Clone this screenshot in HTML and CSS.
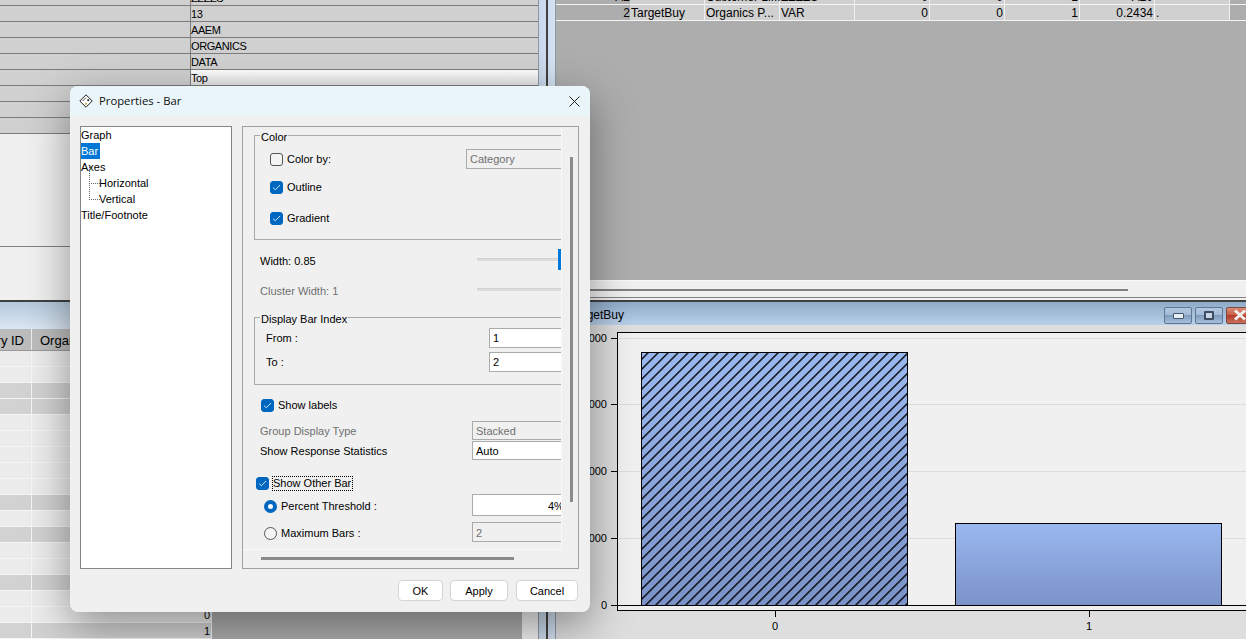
FILE: index.html
```html
<!DOCTYPE html>
<html lang="en">
  <head>
    <meta charset="UTF-8" />
    <title>Properties - Bar</title>
    <link rel="stylesheet" href="styles.css">
  </head>

  <body>
    <div class="desktop">
      <div class="left-col">
        <div class="attr-table">
          <div class="attr-row"><span class="attr-name"></span><span class="attr-val">ZZZZS</span></div>
          <div class="attr-row"><span class="attr-name"></span><span class="attr-val">13</span></div>
          <div class="attr-row"><span class="attr-name"></span><span class="attr-val">AAEM</span></div>
          <div class="attr-row"><span class="attr-name"></span><span class="attr-val">ORGANICS</span></div>
          <div class="attr-row"><span class="attr-name"></span><span class="attr-val">DATA</span></div>
          <div class="attr-row current"><span class="attr-name"></span><span class="attr-val">Top</span></div>
          <div class="attr-row"><span class="attr-name"></span><span class="attr-val"></span></div>
          <div class="attr-row"><span class="attr-name"></span><span class="attr-val"></span></div>
          <div class="attr-row"><span class="attr-name"></span><span class="attr-val"></span></div>
        </div>
        <div class="attr-empty"></div>
        <div class="attr-foot"></div>

        <div class="sub-title"></div>
        <div class="data-wrap">
          <div class="data-table">
            <div class="data-head">
              <span class="hd-a">Country ID</span>
              <span class="hd-b">Organics</span>
            </div>
            <div class="data-row"><i></i><i></i><i></i></div>
            <div class="data-row"><i></i><i></i><i></i></div>
            <div class="data-row dark"><i></i><i></i><i></i></div>
            <div class="data-row dark"><i></i><i></i><i></i></div>
            <div class="data-row"><i></i><i></i><i></i></div>
            <div class="data-row"><i></i><i></i><i></i></div>
            <div class="data-row"><i></i><i></i><i></i></div>
            <div class="data-row"><i></i><i></i><i></i></div>
            <div class="data-row"><i></i><i></i><i></i></div>
            <div class="data-row dark"><i></i><i></i><i></i></div>
            <div class="data-row"><i></i><i></i><i></i></div>
            <div class="data-row dark"><i></i><i></i><i></i></div>
            <div class="data-row"><i></i><i></i><i></i></div>
            <div class="data-row"><i></i><i></i><i></i></div>
            <div class="data-row dark"><i></i><i></i><i></i></div>
            <div class="data-row"><i></i><i></i><i></i></div>
            <div class="data-row"><i></i><i></i><i>0</i></div>
            <div class="data-row dark"><i></i><i></i><i>1</i></div>
          </div>
          <div class="data-blank"></div>
          <div class="data-strip"></div>
        </div>
      </div>

      <div class="splitter"><div class="splitter-line"></div></div>

      <div class="right-col">
        <div class="var-table">
          <div class="var-row">
            <span class="var-no">A2</span><span></span><span>Customer Lif...</span><span>ZZZZS</span>
            <span class="num">0</span><span class="num">0</span><span class="num">1</span><span class="num">A20</span><span></span>
          </div>
          <div class="var-row">
            <span class="var-no">2</span><span>TargetBuy</span><span>Organics P...</span><span>VAR</span>
            <span class="num">0</span><span class="num">0</span><span class="num">1</span><span class="num">0.2434</span><span>.</span>
          </div>
        </div>
        <div class="var-empty"></div>
        <div class="var-foot"><div class="var-scroll"></div></div>

        <div class="chart-title">
          <span class="chart-name">TargetBuy</span>
          <div class="win-btns">
            <div class="win-btn"><span class="min-glyph"></span></div>
            <div class="win-btn"><span class="max-glyph"></span></div>
            <div class="win-btn close">
              <svg width="14" height="12" viewBox="0 0 14 12"><path d="M2 1.5 12 10.5M12 1.5 2 10.5" stroke="#f4f0ee" stroke-width="3" fill="none" /></svg>
            </div>
          </div>
        </div>
        <svg class="chart" width="690" height="314" viewBox="556 325 690 314">
          <defs>
            <linearGradient id="barFill" x1="0" y1="0" x2="0" y2="1">
              <stop offset="0" stop-color="#9ab8f0" />
              <stop offset="1" stop-color="#7a92c8" />
            </linearGradient>
            <pattern id="hatch" width="7.07" height="7.07" patternUnits="userSpaceOnUse" patternTransform="rotate(45)">
              <rect width="1.4" height="7.07" fill="#000" />
            </pattern>
          </defs>
          <rect x="617.5" y="332.5" width="700" height="278" fill="#f0f0f0" stroke="#000" />
          <g stroke="#dcdcdc">
            <path d="M618 338.5H1246M618 404.5H1246M618 471.5H1246M618 538.5H1246" />
          </g>
          <g stroke="#000">
            <path d="M611 338.5H617M611 404.5H617M611 471.5H617M611 538.5H617M611 605.5H1246M775.5 611V617M1089.5 611V617" />
          </g>
          <rect x="641.5" y="352.5" width="266" height="253" fill="url(#barFill)" stroke="#000" />
          <rect x="641.5" y="352.5" width="266" height="253" fill="url(#hatch)" stroke="#000" />
          <rect x="955.5" y="523.5" width="266" height="82" fill="url(#barFill)" stroke="#000" />
          <g class="tick-text" text-anchor="end">
            <text x="607" y="342">4000</text>
            <text x="607" y="408">3000</text>
            <text x="607" y="475">2000</text>
            <text x="607" y="542">1000</text>
            <text x="607" y="609">0</text>
          </g>
          <g class="tick-text" text-anchor="middle">
            <text x="775" y="630">0</text>
            <text x="1089" y="630">1</text>
          </g>
        </svg>
      </div>
    </div>

    <div class="dialog">
      <div class="dlg-head">
        <svg class="dlg-icon" width="14" height="14" viewBox="0 0 14 14">
          <path d="M7 .8 13.2 7 7 13.2.8 7Z" fill="#fff" stroke="#222" stroke-linejoin="round" />
          <path d="M3.6 7 7 3.6" stroke="#444" fill="none" />
          <circle cx="9.2" cy="6.2" r="1.1" fill="#333" />
          <circle cx="7" cy="9.8" r="1.1" fill="#c9a93a" />
        </svg>
        <span class="dlg-title">Properties - Bar</span>
        <svg class="dlg-close" width="11" height="11" viewBox="0 0 11 11"><path d="M.5.5 10.5 10.5M10.5.5.5 10.5" stroke="#222" fill="none" /></svg>
      </div>

      <div class="dlg-main">
        <ul class="tree">
          <li>Graph</li>
          <li><span class="picked">Bar</span></li>
          <li>Axes</li>
          <li class="tree-child">Horizontal</li>
          <li class="tree-child">Vertical</li>
          <li>Title/Footnote</li>
        </ul>

        <div class="panel">
          <div class="form-view">
            <div class="form-inner">
              <div class="group group-color">
                <div class="group-title">Color</div>
                <div class="row row-colorby">
                  <span class="cb"></span><span class="cb-text">Color by:</span>
                  <span class="ctl off w-category">Category</span>
                </div>
                <div class="row row-outline">
                  <span class="cb on"><svg width="9" height="7" viewBox="0 0 9 7"><path d="M1 3.6 3.3 5.8 8 1" stroke="#cfe3f7" fill="none" /></svg></span><span class="cb-text">Outline</span>
                </div>
                <div class="row row-gradient">
                  <span class="cb on"><svg width="9" height="7" viewBox="0 0 9 7"><path d="M1 3.6 3.3 5.8 8 1" stroke="#cfe3f7" fill="none" /></svg></span><span class="cb-text">Gradient</span>
                </div>
              </div>

              <div class="slider-row first">
                <span class="slider-label">Width: 0.85</span>
                <div class="slider"><div class="track"></div><div class="thumb"></div></div>
              </div>
              <div class="slider-row second">
                <span class="slider-label muted">Cluster Width: 1</span>
                <div class="slider"><div class="track"></div></div>
              </div>

              <div class="group group-index">
                <div class="group-title">Display Bar Index</div>
                <div class="row row-from">
                  <span>From :</span><span class="ctl w-index">1</span>
                </div>
                <div class="row row-to">
                  <span>To :</span><span class="ctl w-index">2</span>
                </div>
              </div>

              <div class="row line-labels">
                <span class="cb on"><svg width="9" height="7" viewBox="0 0 9 7"><path d="M1 3.6 3.3 5.8 8 1" stroke="#cfe3f7" fill="none" /></svg></span><span class="cb-text">Show labels</span>
              </div>
              <div class="row line-group">
                <span class="muted">Group Display Type</span><span class="ctl off w-wide">Stacked</span>
              </div>
              <div class="row line-resp">
                <span>Show Response Statistics</span><span class="ctl w-wide">Auto</span>
              </div>
              <div class="row line-other">
                <span class="cb on"><svg width="9" height="7" viewBox="0 0 9 7"><path d="M1 3.6 3.3 5.8 8 1" stroke="#cfe3f7" fill="none" /></svg></span><span class="cb-text focused">Show Other Bar</span>
              </div>
              <div class="row line-percent">
                <span class="radio on"></span><span class="cb-text">Percent Threshold :</span>
                <span class="ctl w-wide percent">4%</span>
              </div>
              <div class="row line-max">
                <span class="radio"></span><span class="cb-text">Maximum Bars :</span>
                <span class="ctl off w-wide">2</span>
              </div>
              <div class="row line-last"><span class="ctl off w-wide"></span></div>
            </div>
          </div>
          <div class="vbar"></div>
          <div class="hbar"></div>
        </div>
      </div>

      <div class="dlg-foot">
        <button class="btn btn-ok">OK</button>
        <button class="btn btn-apply">Apply</button>
        <button class="btn btn-cancel">Cancel</button>
      </div>
    </div>
  </body>
</html>
```

FILE: styles.css
```css
* {
  box-sizing: border-box;
}

html,
body {
  margin: 0;
  height: 639px;
  overflow: hidden;
}

body {
  font-family: "Liberation Sans", Arial, sans-serif;
  font-size: 11px;
  color: #000;
  background: #f0f0f0;
  position: relative;
}

.desktop {
  display: flex;
  width: 1246px;
  height: 639px;
}

/* left side */
.left-col {
  width: 538px;
  height: 639px;
  overflow: hidden;
  display: flex;
  flex-direction: column;
}

.attr-table {
  margin-top: -10px;
  font-size: 11px;
}

.attr-row {
  display: flex;
  height: 16px;
  background: #d0d0d0;
  border-bottom: 1px solid #7c7c7c;
  line-height: 17px;
}

.attr-name {
  width: 190px;
}

.attr-val {
  flex: 1;
  border-left: 1px solid #7c7c7c;
  letter-spacing: -0.4px;
}

.attr-row.current .attr-val {
  background: linear-gradient(#fff, #e4e4e4);
}

.attr-empty {
  height: 113px;
  border-bottom: 1px solid #808080;
  background: #f0f0f0;
}

.attr-foot {
  height: 55px;
  background: #f0f0f0;
  border-bottom: 2px solid #404040;
}

.sub-title {
  height: 27px;
  background: linear-gradient(#b4c8dc, #dbe7f2);
}

.data-wrap {
  display: flex;
  flex: 1;
  background: #adadad;
  min-height: 0;
}

.data-table {
  width: 212px;
}

.data-head {
  display: flex;
  height: 22px;
  background: #bcbcbc;
  border-bottom: 1px solid #999;
  font-size: 13px;
  line-height: 23px;
}

.hd-a {
  width: 32px;
  overflow: hidden;
  white-space: nowrap;
  direction: rtl;
  padding-right: 7px;
  border-right: 1px solid #eee;
}

.hd-b {
  padding-left: 8px;
}

.data-row {
  display: flex;
  height: 16px;
  background: #ececec;
  border-bottom: 1px solid #f6f6f6;
  line-height: 17px;
}

.data-row.dark {
  background: #d2d2d2;
}

.data-row i {
  font-style: normal;
  text-align: right;
  padding-right: 1px;
}

.data-row i:nth-child(1) {
  width: 32px;
  border-right: 1px solid #f6f6f6;
}

.data-row i:nth-child(2) {
  width: 158px;
}

.data-row i:nth-child(3) {
  width: 22px;
  border-right: 1px solid #f6f6f6;
}

.data-blank {
  width: 310px;
}

.data-strip {
  width: 16px;
  background: #f0f0f0;
}

.splitter {
  width: 18px;
  padding: 0 1px;
  background: linear-gradient(90deg, #c8d8ea, #d4e2f2);
  border-left: 1px solid #8c9aa8;
  border-right: 1px solid #8c9aa8;
  display: flex;
  justify-content: center;
}

.splitter-line {
  width: 2px;
  background: #404040;
}

/* right side */
.right-col {
  width: 690px;
  height: 639px;
  overflow: hidden;
  display: flex;
  flex-direction: column;
  background: #dedede;
}

.var-table {
  margin-top: -11px;
  font-size: 12px;
}

.var-row {
  display: flex;
  height: 16px;
  background: #adadad;
  border-bottom: 1px solid #f4f4f4;
  line-height: 17px;
}

.var-row span {
  width: 75px;
  flex-shrink: 0;
  background: #d0d0d0;
  border-right: 1px solid #f0f0f0;
  padding-left: 1px;
  white-space: nowrap;
}

.var-row .num {
  text-align: right;
  padding-right: 1px;
}

.var-row .var-no {
  width: 74px;
  background: #adadad;
  border-right: 0;
  text-align: right;
  padding-right: 0;
}

.var-empty {
  height: 259px;
  background: #adadad;
}

.var-foot {
  height: 22px;
  background: #f0f0f0;
  border-top: 1px solid #fafafa;
  border-bottom: 2px solid #404040;
  padding-top: 8px;
}

.var-foot::after {
  content: "";
  display: block;
  height: 1px;
  margin-top: 6px;
  background: #808080;
}

.var-scroll {
  width: 572px;
  height: 2px;
  background: #808080;
}

.chart-title {
  display: flex;
  align-items: center;
  height: 23px;
  flex-shrink: 0;
  padding-left: 14px;
  font-size: 12px;
  background: linear-gradient(#8fabc8, #b9d0e9);
  overflow: hidden;
}

.chart-name {
  margin-top: 2px;
}

.win-btns {
  display: flex;
  gap: 3px;
  margin: 3px -8px 0 auto;
}

.win-btn {
  width: 28px;
  height: 17px;
  flex-shrink: 0;
  display: flex;
  align-items: center;
  justify-content: center;
  border: 1px solid #5f7794;
  border-radius: 2px;
  background: linear-gradient(#b2c8e0 0, #a4bcd8 45%, #7f9cbd 50%, #a6c0dc 100%);
}

.win-btn.close {
  border-color: #7d4a3f;
  background: linear-gradient(#d98a76 0, #c8604a 45%, #b23c26 50%, #c8705c 100%);
}

.min-glyph {
  width: 11px;
  height: 6px;
  margin-top: 2px;
  background: #e8eef5;
  border: 1px solid #46566a;
  border-radius: 1px;
}

.max-glyph {
  width: 10px;
  height: 9px;
  background: #c9d6e6;
  border: 2px solid #3d4e64;
  border-radius: 1px;
}

.chart {
  display: block;
  flex-shrink: 0;
}

.tick-text {
  font-family: "Liberation Sans", Arial, sans-serif;
  font-size: 11px;
  fill: #000;
}

/* dialog */
.dialog {
  position: absolute;
  left: 70px;
  top: 86px;
  width: 520px;
  height: 526px;
  background: #f0f0f0;
  border-radius: 8px;
  box-shadow: 0 14px 44px rgba(0, 0, 0, 0.4);
  overflow: hidden;
}

.dlg-head {
  display: flex;
  align-items: center;
  height: 30px;
  padding: 0 10px 0 9px;
  background: #e9f5f8;
}

.dlg-icon {
  flex-shrink: 0;
}

.dlg-title {
  margin: 0 0 2px 6px;
  font-family: "Open Sans", sans-serif;
  font-size: 11.3px;
  color: #111;
}

.dlg-close {
  margin-left: auto;
}

.dlg-main {
  display: flex;
  gap: 10px;
  padding: 10px 11px 0 10px;
}

.tree {
  list-style: none;
  width: 152px;
  height: 443px;
  margin: 0;
  padding: 0;
  background: #fff;
  border: 1px solid #82878e;
  line-height: 16px;
}

.tree li {
  height: 16px;
  white-space: nowrap;
}

.picked {
  display: inline-block;
  width: 19px;
  background: #0078d7;
  color: #fff;
}

.tree .tree-child {
  position: relative;
  padding-left: 18px;
}

.tree-child::before {
  content: "";
  position: absolute;
  left: 8px;
  top: -8px;
  width: 10px;
  height: 16px;
  border-left: 1px dotted #666;
  border-bottom: 1px dotted #666;
}

.panel {
  width: 337px;
  height: 443px;
  border: 1px solid #a0a0a0;
  display: grid;
  grid-template-columns: 319px 1fr;
  grid-template-rows: 423px 1fr;
}

.form-view {
  overflow: hidden;
  border-right: 1px solid #f8f8f8;
  border-bottom: 1px solid #fafafa;
}

.form-inner {
  width: 380px;
  padding-top: 8px;
}

.vbar {
  width: 3px;
  height: 345px;
  margin: 30px 0 0 8px;
  background: #8a8a8a;
}

.hbar {
  width: 253px;
  height: 3px;
  margin: 7px 0 0 18px;
  background: #8a8a8a;
}

.group {
  margin-left: 11px;
  width: 360px;
  padding-right: 14px;
  border: 1px solid #a9a9a9;
}

.group-title {
  width: fit-content;
  height: 13px;
  margin-top: -5px;
  padding: 0 1px;
  line-height: 13px;
  background: #f0f0f0;
}

.group-color {
  height: 105px;
  padding-left: 15px;
}

.group-color .group-title {
  margin-left: -10px;
}

.group-index {
  height: 68px;
  margin-top: 17px;
  padding-left: 11px;
}

.group-index .group-title {
  margin-left: -6px;
}

.row {
  display: flex;
  align-items: center;
  height: 20px;
}

.row-colorby {
  margin-top: 5px;
}

.row-outline {
  margin-top: 8px;
}

.row-gradient {
  margin-top: 11px;
}

.row-from {
  margin-top: 2px;
}

.row-to {
  margin-top: 4px;
}

.cb {
  width: 13px;
  height: 13px;
  flex-shrink: 0;
  display: flex;
  align-items: center;
  justify-content: center;
  border: 1px solid #555;
  border-radius: 3px;
  background: #f4f4f4;
}

.cb.on {
  background: #0067c0;
  border-color: #0067c0;
}

.cb-text {
  margin-left: 4px;
}

.focused {
  outline: 1px dotted #000;
  padding: 0 1px 1px 0;
}

.radio {
  width: 13px;
  height: 13px;
  flex-shrink: 0;
  border: 1px solid #555;
  border-radius: 50%;
  background: #f4f4f4;
}

.radio.on {
  border: 4px solid #0067c0;
  background: #fff;
}

.muted {
  color: #6f6f6f;
}

.ctl {
  margin-left: auto;
  height: 100%;
  display: flex;
  align-items: center;
  padding-left: 3px;
  background: #fff;
  border: 1px solid #ababab;
  font-size: 11px;
}

.ctl.off {
  background: #f0f0f0;
  color: #6f6f6f;
}

.w-category {
  width: 133px;
}

.w-index {
  width: 110px;
}

.w-wide {
  width: 128px;
}

.percent {
  padding-left: 75px;
}

.slider-row {
  display: flex;
  width: 357px;
  height: 21px;
  padding-left: 17px;
}

.slider-row.first {
  margin-top: 9px;
}

.slider-row.second {
  margin-top: 9px;
}

.slider-label {
  line-height: 24px;
}

.slider {
  position: relative;
  width: 123px;
  height: 21px;
  margin-left: auto;
}

.track {
  height: 3px;
  margin-top: 9px;
  background: #dcdcdc;
  border-top: 1px solid #d0d0d0;
}

.thumb {
  position: absolute;
  left: 81px;
  top: 0;
  width: 11px;
  height: 21px;
  background: #0078d7;
}

.line-labels,
.line-group,
.line-resp,
.line-other,
.line-percent,
.line-max,
.line-last {
  width: 357px;
}

.line-labels {
  margin-top: 10px;
  padding-left: 18px;
}

.line-group {
  height: 19px;
  margin-top: 6px;
  padding-left: 17px;
}

.line-resp {
  height: 19px;
  margin-top: 1px;
  padding-left: 17px;
}

.line-other {
  margin-top: 13px;
  padding-left: 13px;
}

.line-percent {
  height: 22px;
  margin-top: 1px;
  padding-left: 21px;
}

.line-max {
  margin-top: 6px;
  padding-left: 21px;
}

.line-percent .radio,
.line-percent .cb-text,
.line-max .radio,
.line-max .cb-text {
  margin-top: 2px;
}

.line-percent .ctl,
.line-max .ctl {
  padding-top: 1px;
}

.line-last {
  margin-top: 7px;
}

.dlg-foot {
  display: flex;
  justify-content: flex-end;
  gap: 7px;
  padding: 11px 12px 0 0;
}

.btn {
  height: 21px;
  padding: 0;
  background: #fff;
  border: 1px solid #d4d4d4;
  border-radius: 4px;
  font-family: "Liberation Sans", Arial, sans-serif;
  font-size: 11px;
  color: #000;
}

.btn-ok {
  width: 45px;
}

.btn-apply {
  width: 58px;
}

.btn-cancel {
  width: 62px;
  margin-left: 1px;
}
```
